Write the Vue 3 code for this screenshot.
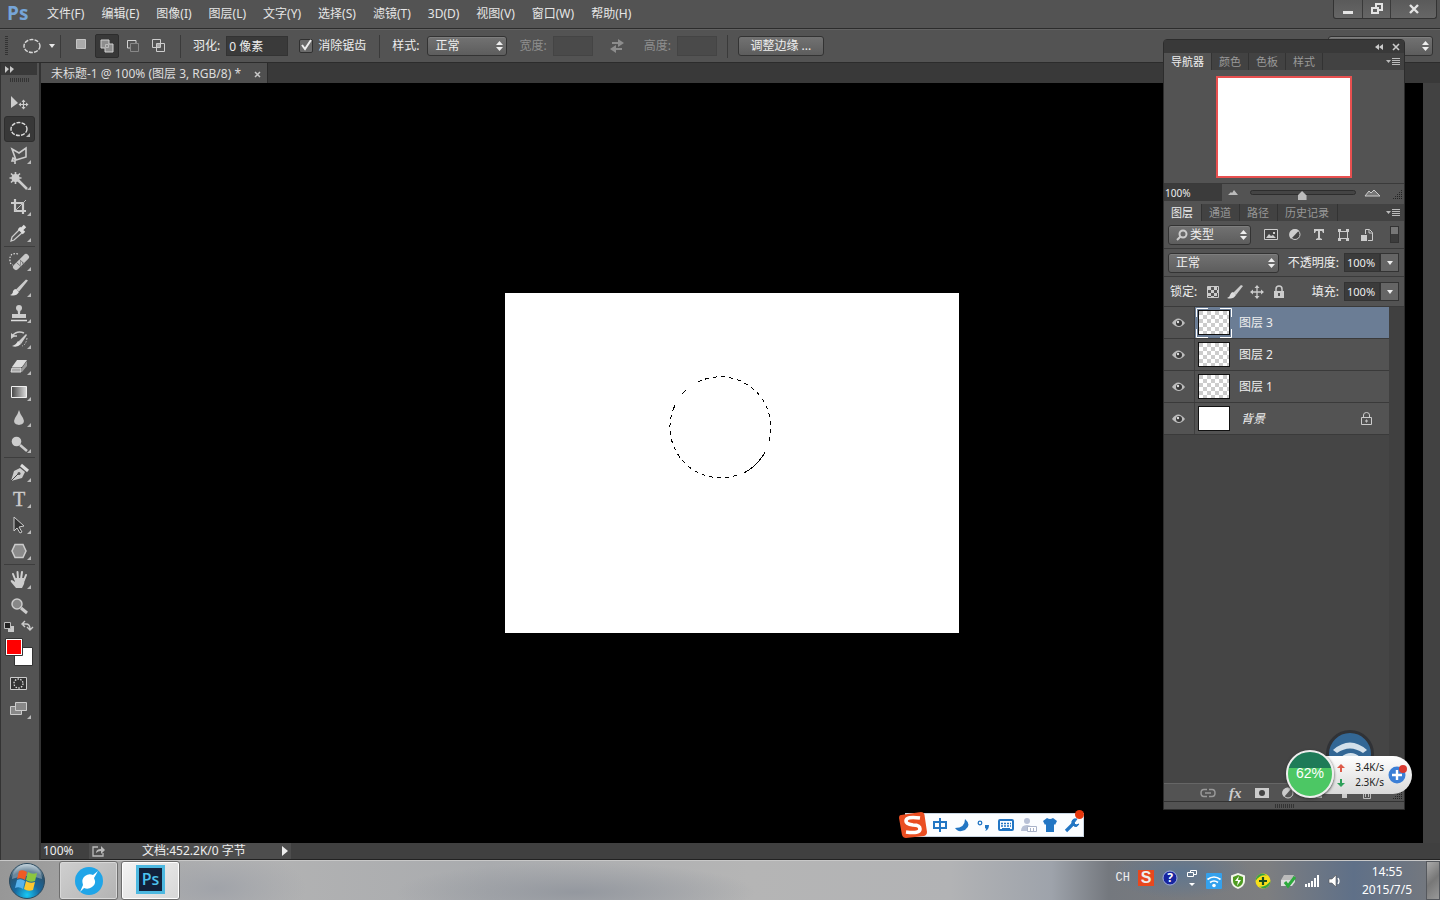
<template>
  <div class="desktop">
    <!-- Menu bar -->
    <header class="menu-bar">
      <span class="app-logo">Ps</span>
      <nav class="menus">
        <button v-for="item in menus" :key="item" type="button">{{ item }}</button>
      </nav>
      <div class="window-buttons">
        <button type="button" aria-label="minimize">
          <svg width="12" height="12"><path d="M1 8h10v3H1z" fill="#e4e4e4" /></svg>
        </button>
        <button type="button" aria-label="restore">
          <svg width="12" height="12" fill="none" stroke="#e4e4e4" stroke-width="2"><path d="M5 4V1h6v6H8M1 5h6v5H1z" /></svg>
        </button>
        <button type="button" class="close" aria-label="close">
          <svg width="12" height="12" stroke="#e4e4e4" stroke-width="2.4"><path d="M2 2l8 8M10 2l-8 8" /></svg>
        </button>
      </div>
    </header>

    <!-- Options bar -->
    <section class="options-bar">
      <i class="grip-vertical"></i>
      <button type="button" class="preset" aria-label="tool preset">
        <svg width="34" height="18">
          <ellipse cx="9" cy="9" rx="8" ry="6.5" fill="none" stroke="#d8d8d8" stroke-width="1.4" stroke-dasharray="4 1.2" />
          <path d="M26 7h6l-3 4z" fill="#e8e8e8" />
        </svg>
      </button>
      <i class="divider"></i>
      <div class="modes">
        <button v-for="mode in modes" :key="mode.name" type="button" :class="{ active: mode.active }" :aria-label="mode.name">
          <svg width="16" height="16" v-html="mode.icon"></svg>
        </button>
      </div>
      <i class="divider"></i>
      <label class="field">羽化: <input v-model="feather" class="feather" type="text" /></label>
      <label class="check">
        <input v-model="antiAlias" type="checkbox" />
        <svg v-if="antiAlias" width="15" height="15"><path d="M3 7l3 4 6-9" fill="none" stroke="#eee" stroke-width="2" /></svg>
        消除锯齿
      </label>
      <i class="divider"></i>
      <label class="field style-field">样式:
        <span class="select style-select">
          <select><option>正常</option></select>
          <svg width="7" height="12"><path d="M0 5l3.5-4L7 5zM0 7l3.5 4L7 7z" /></svg>
        </span>
      </label>
      <label class="field off">宽度: <input type="text" disabled /></label>
      <button type="button" class="swap" aria-label="swap" disabled>
        <svg width="16" height="14" fill="#8d8d8d"><path d="M3 3h6V0l6 4-6 4V5H3zM13 9v2H7v3l-6-4 6-4v3z" /></svg>
      </button>
      <label class="field off">高度: <input type="text" disabled /></label>
      <i class="divider"></i>
      <button type="button" class="refine">调整边缘 ...</button>
      <span class="select workspace">
        <select aria-label="workspace"><option></option></select>
        <svg width="7" height="12"><path d="M0 5l3.5-4L7 5zM0 7l3.5 4L7 7z" /></svg>
      </span>
    </section>

    <div class="work">
      <!-- Tool column -->
      <aside class="toolbox">
        <div class="toolbox-head"><svg width="9" height="7" fill="#c8c8c8"><path d="M0 0l4 3-4 4zM5 0l4 3-4 4z" /></svg></div>
        <i class="grip"></i>
        <div v-for="(group, g) in tools" :key="g" class="tool-group">
          <button v-for="tool in group" :key="tool.name" type="button" :class="{ active: tool.active, more: tool.more }" :aria-label="tool.name">
            <svg width="24" height="24" v-html="tool.icon"></svg>
          </button>
        </div>
        <button type="button" class="swatches" aria-label="colors">
          <svg width="36" height="48">
            <path d="M7 7h6v6H7z" fill="#c8c8c8" /><path d="M3.5 3.5h6v6h-6z" fill="#222" stroke="#bbb" />
            <path d="M22 5h3q4 0 4 5M24 2l-3 3 3 3M26 8l3 3 3-3" fill="none" stroke="#ccc" stroke-width="1.4" />
            <path d="M13.5 28.5h18v18h-18z" fill="#fff" stroke="#333" /><path d="M4.5 19.5h17v17h-17z" fill="#fff" stroke="#333" /><path d="M6 21h14v14H6z" fill="red" />
          </svg>
        </button>
        <div class="tool-group screen-tools">
          <button type="button" aria-label="quick mask">
            <svg width="24" height="24"><path d="M3.5 5.5h16v12h-16z" fill="#333" stroke="#ccc" /><circle cx="11.5" cy="11.5" r="4.5" fill="none" stroke="#ddd" stroke-width="1.3" stroke-dasharray="1.5 1.3" /></svg>
          </button>
          <button type="button" class="more" aria-label="screen mode">
            <svg width="24" height="24"><path d="M3.5 8.5h11v8h-11z" fill="#888" stroke="#ccc" /><path d="M8.5 4.5h11v8h-11z" fill="#888" stroke="#ccc" /></svg>
          </button>
        </div>
      </aside>

      <!-- Document -->
      <main class="document">
        <div class="tab-strip">
          <div class="doc-tab">未标题-1 @ 100% (图层 3, RGB/8) *
            <button type="button" aria-label="close tab"><svg width="7" height="7" stroke="#c8c8c8" stroke-width="1.5"><path d="M1 1l5 5M6 1L1 6" /></svg></button>
          </div>
        </div>
        <div class="view">
          <div class="stage">
            <svg class="artboard" width="454" height="340" fill="none" stroke="#000">
              <g shape-rendering="crispEdges">
                <path d="M193 89A50.5 50.5 0 0 1 263 151" stroke-dasharray="4 4" />
                <path d="M260 159A50.5 50.5 0 0 1 239 180" />
                <path d="M232 182A50.5 50.5 0 0 1 168 117" stroke-dasharray="4 4" />
                <path d="M168 117L170 112M177 101l4-4" />
              </g>
            </svg>
          </div>
          <div class="scroll-y"></div>
        </div>
        <footer class="status">
          <span class="zoom">100%</span>
          <span class="doc-info">
            <svg width="14" height="12" fill="none" stroke="#bbb" stroke-width="1.3"><path d="M6 2H1v9h10V8" /><path d="M4 8q0-4 5-4V1l4 4-4 4V6q-3 0-5 2z" fill="#bbb" stroke="none" /></svg>
            <span>文档:452.2K/0 字节</span>
            <svg width="6" height="10"><path d="M0 0l6 5-6 5z" fill="#eee" /></svg>
          </span>
        </footer>
      </main>
    </div>

    <!-- Taskbar -->
    <footer class="taskbar">
      <button type="button" class="start" aria-label="start">
        <svg width="38" height="38" viewBox="0 0 38 38">
          <defs>
            <radialGradient id="orb" cx=".5" cy=".9" r=".9"><stop offset="0" stop-color="#18c8f4" /><stop offset=".4" stop-color="#17689f" /><stop offset=".75" stop-color="#2b536f" /><stop offset="1" stop-color="#b5cad6" /></radialGradient>
          </defs>
          <circle cx="19" cy="19" r="17.5" fill="url(#orb)" stroke="#2c4a5e" />
          <path d="M4 17a15 15 0 0 1 30 0q-15-6-30 0z" fill="#fff" opacity=".3" />
          <path d="M11 9q4-2 8 1l-2 8q-4-3-8-1z" fill="#ee5a24" /><path d="M20 10q4 3 9 1l-2 8q-5 2-9-1z" fill="#8cc63f" />
          <path d="M9 18q4-2 8 1l-2 8q-4-3-8-1z" fill="#58b2ec" /><path d="M18 19q4 3 9 1l-2 8q-5 2-9-1z" fill="#fdc72f" />
        </svg>
      </button>
      <button type="button" class="task" aria-label="browser">
        <svg width="30" height="30"><circle cx="15" cy="15" r="14" fill="#20a5e8" /><path d="M24 5l-4 7q3 6-2 9-4 3-8 1l-4 4 3-7q-2-6 2-9 4-3 8-1z" fill="#fff" /></svg>
      </button>
      <button type="button" class="task current" aria-label="photoshop"><span class="ps-tile">Ps</span></button>
      <div class="tray">
        <span class="ime">CH</span>
        <span class="sogou-mini">S</span>
        <svg class="raised" width="16" height="16"><circle cx="8" cy="8" r="7" fill="#1725a0" stroke="#9faddd" /><text x="8" y="12" text-anchor="middle" fill="#fff" class="help-mark">?</text></svg>
        <svg class="raised" width="12" height="18" fill="none" stroke="#fff"><path d="M4.5 3V1.5h6v4H8M1.5 3.5h6v4h-6z" /><path d="M3 14h6l-3 3z" fill="#fff" stroke="none" /></svg>
        <svg width="16" height="16"><rect width="16" height="16" rx="1" fill="#34a1ed" /><path d="M1.5 6.5q6.5-5 13 0M4 9.5q4-3 8 0" fill="none" stroke="#fff" stroke-width="1.7" /><circle cx="8" cy="12.5" r="1.8" fill="#fff" /></svg>
        <svg width="16" height="16"><path d="M8 0l7 2.5V8q0 5-7 8-7-3-7-8V2.5z" fill="#f2f6ea" /><path d="M8 2l5 2v4q0 4-5 6-5-2-5-6V4z" fill="#4e9c21" /><path d="M9 3L5 8h3l-1 5 4-6H8z" fill="#fff" /></svg>
        <svg width="18" height="16"><circle cx="9" cy="8" r="7.5" fill="#f8df18" /><path d="M1.5 8A7.5 7.5 0 0 1 9 .5l4 2Q6 1 1.5 8zM16.5 8A7.5 7.5 0 0 1 9 15.5l-4-2q7 1 11.5-5.5z" fill="#35a344" /><path d="M9 4v8M5 8h8" stroke="#174d21" stroke-width="2.2" /></svg>
        <svg width="16" height="16"><path d="M4 2h10l-2 5H1z" fill="#bbb" /><path d="M1 7h11l3-4v6l-3 4H1z" fill="#dedede" /><path d="M5 9l3 4 7-9" fill="none" stroke="#2caa3c" stroke-width="3" /></svg>
        <svg width="16" height="14" fill="#fff"><path d="M1 10h2v3H1zM4 9h2v4H4zM7 7h2v6H7zM10 4h2v9h-2zM13 1h2v12h-2z" /></svg>
        <svg width="14" height="14"><path d="M1 5h3l4-4v12l-4-4H1z" fill="#fff" stroke="#555" stroke-width=".6" /><path d="M10 4q2 3 0 6" fill="none" stroke="#fff" stroke-width="1.3" /></svg>
      </div>
      <div class="clock"><time>14:55</time><time>2015/7/5</time></div>
      <button type="button" class="show-desktop" aria-label="show desktop"></button>
    </footer>

    <!-- Floating panel group -->
    <aside class="panels">
      <div class="panel-head">
        <svg width="25" height="8"><path d="M4 1v6L0 4zM8 1v6L4 4z" fill="#ccc" /><path d="M18 1l6 6M24 1l-6 6" stroke="#ccc" stroke-width="1.6" /></svg>
      </div>
      <div class="panel-tabs">
        <button v-for="(tab, i) in navTabs" :key="tab" type="button" :class="{ active: i === 0 }">{{ tab }}</button>
        <svg class="panel-menu" width="14" height="9"><path d="M0 2h5L2.5 5z" fill="#bbb" /><path d="M6 .5h8M6 2.5h8M6 4.5h8M6 6.5h8" stroke="#bbb" /></svg>
      </div>
      <div class="navigator"><div class="nav-thumb"></div></div>
      <div class="nav-zoom">
        <input v-model="zoom" type="text" aria-label="zoom" />
        <svg width="10" height="6"><path d="M0 5h10L6 0 4 3 3 2z" fill="#bbb" /></svg>
        <input type="range" value="49" aria-label="zoom slider" />
        <svg width="17" height="8" fill="#777" stroke="#ccc"><path d="M1 7l4-5 2 2 3-3 6 6z" /></svg>
        <i class="size-grip"></i>
      </div>
      <div class="panel-tabs layer-tabs">
        <button v-for="(tab, i) in layerTabs" :key="tab" type="button" :class="{ active: i === 0 }">{{ tab }}</button>
        <svg class="panel-menu" width="14" height="9"><path d="M0 2h5L2.5 5z" fill="#bbb" /><path d="M6 .5h8M6 2.5h8M6 4.5h8M6 6.5h8" stroke="#bbb" /></svg>
      </div>
      <div class="layer-row">
        <span class="select kind-select">
          <svg class="lens" width="12" height="12" fill="none" stroke="#ccc" stroke-width="2"><circle cx="7" cy="5" r="3.5" /><path d="M4.5 7.5L1 11" /></svg>
          <select aria-label="filter"><option>类型</option></select>
          <svg width="7" height="12"><path d="M0 5l3.5-4L7 5zM0 7l3.5 4L7 7z" /></svg>
        </span>
        <div class="filters">
          <button v-for="filter in filters" :key="filter.name" type="button" :aria-label="filter.name">
            <svg width="14" height="14" v-html="filter.icon"></svg>
          </button>
        </div>
        <i class="toggle"></i>
      </div>
      <div class="layer-row">
        <span class="select blend-select">
          <select aria-label="blend mode"><option>正常</option></select>
          <svg width="7" height="12"><path d="M0 5l3.5-4L7 5zM0 7l3.5 4L7 7z" /></svg>
        </span>
        <label class="percent">不透明度: <input v-model="opacity" type="text" /></label>
        <button type="button" class="drop" aria-label="opacity"><svg width="6" height="4"><path d="M0 0h6L3 4z" fill="#eee" /></svg></button>
      </div>
      <div class="layer-row lock-row">
        <span class="lock-label">锁定:</span>
        <button v-for="lock in locks" :key="lock.name" type="button" class="lock" :aria-label="lock.name">
          <svg width="16" height="16" v-html="lock.icon"></svg>
        </button>
        <label class="percent">填充: <input v-model="fill" type="text" /></label>
        <button type="button" class="drop" aria-label="fill"><svg width="6" height="4"><path d="M0 0h6L3 4z" fill="#eee" /></svg></button>
      </div>
      <div class="layers">
        <ul>
          <li v-for="layer in layers" :key="layer.name" :class="{ active: layer.active }">
            <button type="button" class="eye" aria-label="visibility">
              <svg width="14" height="10"><path d="M0 5q6-9 13 0-6 8-13 0z" fill="#bdbdbd" /><circle cx="7" cy="5" r="3" fill="#383838" /><circle cx="6" cy="4" r="1.2" fill="#ddd" /></svg>
            </button>
            <div class="thumb-cell">
              <i class="thumb" :class="{ solid: layer.background }"></i>
              <svg v-if="layer.active" class="corners" width="36" height="30" fill="none" stroke="#fff"><path d="M.5 9V.5H12M24 .5h11.5V9M35.5 21v8.5H24M12 29.5H.5V21" /></svg>
            </div>
            <span class="layer-name" :class="{ italic: layer.background }">{{ layer.name }}</span>
            <svg v-if="layer.background" class="layer-lock" width="11" height="13" fill="none" stroke="#ccc"><path d="M.5 5.5h10v7H.5zM2.5 5V3q0-2.500 3-2.500t3 2.500v2" /><path d="M5 8h1v2H5z" /></svg>
          </li>
        </ul>
        <div class="layers-scroll"></div>
      </div>
      <div class="panel-tools">
        <svg width="16" height="12" fill="none" stroke="#999" stroke-width="1.5"><path d="M7 2.5H4q-3 0-3 3.5t3 3.5h3M9 2.5h3q3 0 3 3.5t-3 3.5H9M5 6h6" /></svg>
        <span class="fx">fx</span>
        <svg width="14" height="12"><path d="M0 1h14v10H0z" fill="#ccc" /><circle cx="7" cy="6" r="3" fill="#444" /></svg>
        <svg width="14" height="12"><circle cx="6" cy="6" r="5" fill="#555" stroke="#ccc" /><path d="M2 10A5 5 0 0 1 9 2z" fill="#ccc" /></svg>
        <svg width="14" height="12"><path d="M0 2h5l1 2h7v7H0z" fill="#bbb" /></svg>
        <svg width="12" height="12"><path d="M1 2h10v9H6V7H1z" fill="#ccc" /></svg>
        <svg width="12" height="12" fill="none" stroke="#bbb"><path d="M1 2.5h10M2.5 3v8.5h7V3M4.5 4v6M7.5 4v6" /></svg>
        <i class="size-grip"></i>
      </div>
      <div class="panel-foot"><i class="grip"></i></div>
    </aside>

    <!-- Network monitor -->
    <div class="wifi-badge">
      <svg width="48" height="48"><circle cx="24" cy="24" r="22.5" fill="#336795" stroke="#303236" stroke-width="3" /><path d="M7 20q17-15 34 0l-4 3q-13-9-26 0zM15 27q10-8 19 0l-4 3q-5-4-11 0z" fill="#d3e0ea" /></svg>
    </div>
    <div class="net-monitor">
      <div class="usage">62%</div>
      <div class="rates">
        <div><svg width="8" height="8"><path d="M4 0l4 4H5v4H3V4H0z" fill="#dd5b49" /></svg><span>3.4K/s</span></div>
        <div><svg width="8" height="8"><path d="M4 8L0 4h3V0h2v4h3z" fill="#2ea05a" /></svg><span>2.3K/s</span></div>
      </div>
      <button type="button" class="boost" aria-label="boost">
        <svg width="19" height="22"><circle cx="9" cy="12" r="8.5" fill="#3b7fd6" /><path d="M9 7v10M4 12h10" stroke="#fff" stroke-width="2.4" /><circle cx="15" cy="6" r="4" fill="#d93a32" /></svg>
      </button>
    </div>

    <!-- Input method bar -->
    <div class="ime-bar">
      <svg class="sogou-logo" width="30" height="30"><path d="M3 5L23 2q3 0 3.5 3L29 22q0 3-3 4L8 28q-3 0-4-3L1 8q0-3 2-3z" fill="#ea4e22" /><path d="M22 8Q8 6 8 11q0 3 7 4 7 0 7 4 0 5-14 3" fill="none" stroke="#fff" stroke-width="3.6" /></svg>
      <button v-for="item in imeItems" :key="item.name" type="button" :aria-label="item.name">
        <svg width="18" height="16" v-html="item.icon"></svg>
      </button>
      <i class="ime-dot"></i>
    </div>
  </div>
</template>

<script setup>
import { ref } from 'vue';

const feather = ref('0 像素');
const antiAlias = ref(true);
const zoom = ref('100%');
const opacity = ref('100%');
const fill = ref('100%');

const menus = ['文件(F)', '编辑(E)', '图像(I)', '图层(L)', '文字(Y)', '选择(S)', '滤镜(T)', '3D(D)', '视图(V)', '窗口(W)', '帮助(H)'];
const navTabs = ['导航器', '颜色', '色板', '样式'];
const layerTabs = ['图层', '通道', '路径', '历史记录'];

const layers = [
  { name: '图层 3', active: true },
  { name: '图层 2' },
  { name: '图层 1' },
  { name: '背景', background: true },
];

const modes = [
  { name: 'new', icon: '<path d="M3.5 1.5h9v9h-9z" fill="#aaa" stroke="#c4c4c4"/>' },
  { name: 'add', active: true, icon: '<path d="M2 2h8v4h4v8H6v-4H2z" fill="#8d8d8d" stroke="#d2d2d2"/><path d="M6.5 9.5v-3h3v3z" stroke="#bbb" fill="none"/>' },
  { name: 'subtract', icon: '<path d="M5.5 5.5h8v8h-8z" fill="none" stroke="#888"/><path d="M5 10H2.5V2.5H11V5" fill="none" stroke="#d2d2d2"/>' },
  { name: 'intersect', icon: '<path d="M1.5 1.5h8v8h-8zM5.5 5.5h8v8h-8z" fill="none" stroke="#ccc"/><path d="M6 6h3v3H6z" fill="#aaa"/>' },
];

const tools = [
  [
    { name: 'move', icon: '<path d="M4 5v12l7-5z" fill="#ccc"/><path d="M16.5 9v9M12 13.5h9" stroke="#ccc" stroke-width="1.2"/><path d="M14.5 11l2-2.5 2 2.5zM14.5 16l2 2.5 2-2.5zM14 11.5l-2.5 2 2.5 2zM19 11.5l2.5 2-2.5 2z" fill="#ccc"/>' },
    { name: 'marquee', active: true, more: true, icon: '<ellipse cx="12" cy="12" rx="8" ry="6.5" fill="none" stroke="#ddd" stroke-width="1.4" stroke-dasharray="4 1.2"/>' },
    { name: 'lasso', more: true, icon: '<path d="M5 6l7 4 7-5v9l-10 3zM9 17l-3-2-1 3h3v3" fill="none" stroke="#ccc" stroke-width="1.6"/>' },
    { name: 'wand', more: true, icon: '<path d="M8.5 3v12M2.5 9h12M4 4.5l9 9M13 4.5l-9 9" stroke="#ccc" stroke-width="1.6"/><circle cx="8.5" cy="9" r="4" fill="#ccc"/><path d="M11 11l9 9" stroke="#ccc" stroke-width="2.5"/>' },
    { name: 'crop', more: true, icon: '<path d="M8 4v12h11M4 8h12v11" fill="none" stroke="#ccc" stroke-width="2.2"/><path d="M8 16L19 5" stroke="#bbb"/>' },
    { name: 'eyedropper', more: true, icon: '<path d="M13 8l-8 8-1 4 3-1 9-8z" fill="#555" stroke="#ccc" stroke-width="1.3"/><path d="M12 7l5 5M14 9l4-4" stroke="#ddd" stroke-width="3.4"/>' },
  ],
  [
    { name: 'healing', more: true, icon: '<path d="M11 4q-9-2-8 7 0 3 3 4" fill="none" stroke="#ddd" stroke-width="1.2" stroke-dasharray="1.5 1.5"/><path d="M9 17l10-10" stroke="#c8c8c8" stroke-width="6" stroke-linecap="round"/><path d="M9.5 12.5l5 4.5M12.5 9.5l5 4.5" stroke="#777"/><path d="M13 12h1M15 13h1M13 14h1" stroke="#555"/>' },
    { name: 'brush', more: true, icon: '<path d="M19 3.5l2 1-9 11-3-2z" fill="#ccc"/><path d="M9 13l3 3q-3 5-9 3 3-1 3-4 1-2 3-2z" fill="#ddd"/>' },
    { name: 'stamp', more: true, icon: '<circle cx="12" cy="6" r="3" fill="#ccc"/><path d="M10.5 7h3l-.5 5h6v4H5v-4h6z" fill="#ccc"/><path d="M4 18.5h16" stroke="#ddd" stroke-width="1.5"/>' },
    { name: 'history', more: true, icon: '<path d="M19 6l1 1-6 9-3-2z" fill="#ccc"/><path d="M11 13l3 3q-4 4-9 2 4-1 6-5z" fill="#ddd"/><path d="M4 8h6M5 8q5-6 12-3" fill="none" stroke="#ccc" stroke-width="1.5"/><path d="M4 5v6l4-3z" fill="#ccc"/><path d="M20 10q-1 7-5 8" fill="none" stroke="#ccc" stroke-dasharray="1.5 1.5"/>' },
    { name: 'eraser', more: true, icon: '<path d="M10 6h10l-5 7H5z" fill="#ddd"/><path d="M5 14h9v4H4z" fill="#aaa" stroke="#ddd"/><path d="M15 14l5-7v5l-5 6z" fill="#999"/>' },
    { name: 'gradient', more: true, icon: '<defs><linearGradient id="gr"><stop stop-color="#444"/><stop offset="1" stop-color="#ddd"/></linearGradient></defs><path d="M4.5 6.5h15v11h-15z" fill="url(#gr)" stroke="#eee"/>' },
    { name: 'blur', more: true, icon: '<path d="M12 4q1 4 4 8 3 6-4 7-7-1-4-7 3-4 4-8z" fill="#c8c8c8"/>' },
    { name: 'dodge', more: true, icon: '<circle cx="9.5" cy="9.5" r="4.8" fill="#ccc"/><path d="M13 13l7 6" stroke="#ccc" stroke-width="2.5"/>' },
  ],
  [
    { name: 'pen', more: true, icon: '<path d="M4 20l3-10 6-3 5 4-3 6z" fill="#ccc"/><path d="M14 4l7 6" stroke="#ddd" stroke-width="3"/><path d="M4 20l7-7" stroke="#444"/><circle cx="12" cy="12.5" r="1.5" fill="#555"/>' },
    { name: 'type', more: true, icon: '<text x="12" y="19" text-anchor="middle" font-family="Liberation Serif, serif" font-size="20" fill="#ccc" stroke="#ccc" stroke-width=".4">T</text>' },
    { name: 'select path', more: true, icon: '<path d="M7 4v14l3-3 3 5 2-1-3-5 5-1z" fill="#333" stroke="#ccc"/>' },
    { name: 'shape', more: true, icon: '<path d="M8 5.5h8l3 6.5-3 6.5H8L5 12z" fill="#8b8b8b" stroke="#ccc" stroke-width="1.5"/>' },
  ],
  [
    { name: 'hand', more: true, icon: '<path d="M8 11L6 6M11 11l-.5-7M14 11l1-7M17 12l2-5" stroke="#d0d0d0" stroke-width="2" stroke-linecap="round"/><path d="M7 10h11l-1 6-2 4H9l-5-6q-1-2 1-2l3 2z" fill="#ccc"/>' },
    { name: 'zoom', icon: '<circle cx="10" cy="10" r="5" fill="#888" stroke="#ccc" stroke-width="1.5"/><path d="M14 14l6 5" stroke="#ccc" stroke-width="3"/>' },
  ],
];

const filters = [
  { name: 'pixel', icon: '<path d="M.5 1.5h13v10H.5z" fill="#444" stroke="#ccc"/><path d="M2 10l3-4 2 2 2-1 3 3z" fill="#ccc"/><path d="M9 4h2v2H9z" fill="#ccc"/>' },
  { name: 'adjustment', icon: '<circle cx="7" cy="6.5" r="5" fill="#444" stroke="#ccc"/><path d="M3 11A5.5 5.5 0 0 1 11 2.5z" fill="#ccc"/>' },
  { name: 'type', icon: '<path d="M2 1h10v4h-1l-1-2H8v7l2 1v1H4v-1l2-1V3H4L3 5H2z" fill="#ccc"/>' },
  { name: 'shape', icon: '<path d="M3.5 3.5h8v7h-8z" fill="none" stroke="#ccc"/><path d="M2 1h3v3H2zM10 1h3v3h-3zM2 10h3v3H2zM10 10h3v3h-3z" fill="#ccc"/>' },
  { name: 'smart', icon: '<path d="M5.5 6V1.5h4l3 3v8H8M9 2v3h3" fill="none" stroke="#ccc"/><path d="M1 7h6v6H1z" fill="#ccc"/>' },
];

const locks = [
  { name: 'pixels', icon: '<path d="M2.5 2.5h11v11h-11z" fill="#555" stroke="#ccc"/><path d="M3 3h3v3H3zM9 3h3v3H9zM6 6h3v3H6zM3 9h3v3H3zM9 9h3v3H9zM12 6h1v3h-1zM6 12h3v1H6z" fill="#ccc"/>' },
  { name: 'paint', icon: '<path d="M14 1l2 1-7 9-3-2z" fill="#ccc"/><path d="M6 8l3 3q-3 5-9 3 3-1 3-3 1-3 3-3z" fill="#ddd"/>' },
  { name: 'position', icon: '<path d="M8 2v12M2 8h12" stroke="#ccc" stroke-width="1.3"/><path d="M5.5 4L8 1l2.5 3zM5.5 12L8 15l2.5-3zM4 5.5L1 8l3 2.5zM12 5.5L15 8l-3 2.5z" fill="#ccc"/>' },
  { name: 'all', icon: '<path d="M5 8V5q0-3 3-3t3 3v3" fill="none" stroke="#ccc" stroke-width="1.5"/><path d="M3 7h10v7H3z" fill="#ccc"/><path d="M7 9h2v3H7z" fill="#555"/>' },
];

const imeItems = [
  { name: 'chinese', icon: '<path d="M3 5h12v6H3zM9 1v14" fill="none" stroke="#2276c4" stroke-width="2"/>' },
  { name: 'moon', icon: '<path d="M12 2q7 6 0 11-7 3-10-2 10 0 10-9z" fill="#2276c4"/>' },
  { name: 'punctuation', icon: '<circle cx="5" cy="6" r="1.8" fill="none" stroke="#2276c4" stroke-width="1.3"/><path d="M10 8h4q0 5-4 6 2-2 0-3z" fill="#2276c4"/>' },
  { name: 'keyboard', icon: '<rect x="2" y="3" width="14" height="10" rx="1" fill="none" stroke="#2276c4" stroke-width="2"/><path d="M4 6.5h10M4 9h10" stroke="#2276c4" stroke-width="1.3" stroke-dasharray="2 1"/><path d="M5 11.5h8" stroke="#2276c4"/>' },
  { name: 'account', icon: '<circle cx="8" cy="4" r="3" fill="#b8c1d6"/><path d="M2 14q0-6 6-6t6 6z" fill="#b8c1d6"/><path d="M8.5 9.5h9v5h-9z" fill="#fff" stroke="#a9b3c9"/><path d="M11.5 11v3M14.5 11v3" stroke="#a9b3c9"/>' },
  { name: 'skin', icon: '<path d="M6 1q3 2 6 0l4 3-2 4-1-1v8H5V7L4 8 2 4z" fill="#2276c4"/>' },
  { name: 'settings', icon: '<path d="M3 14l7-7" stroke="#2276c4" stroke-width="3.2"/><path d="M14 2q-4-1-5 2t2 5 5-2l-3 1-2-2z" fill="#2276c4" stroke="#2276c4"/>' },
];
</script>

<style>
body {
  margin: 0;
  overflow: hidden;
}
</style>

<style scoped>
.desktop {
  position: relative;
  display: flex;
  flex-direction: column;
  height: 100vh;
  overflow: hidden;
  background: #535353;
  color: #eee;
  font-family: "Noto Sans", "Noto Sans CJK SC", sans-serif;
  font-size: 12px;
  line-height: 16px;
}

.desktop * {
  box-sizing: border-box;
}

button,
input,
select {
  font: inherit;
  color: inherit;
  margin: 0;
  padding: 0;
  border: 0;
  background: none;
  border-radius: 0;
}

svg {
  display: block;
  flex-shrink: 0;
}

/* menu bar */
.menu-bar {
  display: flex;
  height: 29px;
  flex-shrink: 0;
  border-bottom: 1px solid #2c2c2c;
  padding-right: 3px;
}

.app-logo {
  width: 39px;
  padding-left: 7px;
  color: #76a5d8;
  font-family: "Open Sans", sans-serif;
  font-size: 19px;
  font-weight: 700;
  line-height: 26px;
}

.menus {
  display: flex;
  flex: 1;
  gap: 17px;
  padding-left: 8px;
}

.menus button {
  height: 28px;
  color: #e6e6e6;
}

.window-buttons {
  display: flex;
  height: 19px;
  border: 1px solid #333;
  border-top: 0;
  border-radius: 0 0 3px 3px;
  background: linear-gradient(#5a5a5a, #666);
}

.window-buttons button {
  display: grid;
  place-items: center;
  width: 28px;
}

.window-buttons button + button {
  border-left: 1px solid #3a3a3a;
}

.window-buttons .close {
  width: 46px;
}

/* options bar */
.options-bar {
  display: flex;
  align-items: center;
  height: 34px;
  flex-shrink: 0;
  padding: 0 7px 0 5px;
  border-top: 1px solid #626262;
  border-bottom: 1px solid #2c2c2c;
}

.grip-vertical {
  width: 3px;
  height: 20px;
  margin-right: 15px;
  background: repeating-linear-gradient(#333 0 1px, #535353 1px 2px);
}

.divider {
  width: 1px;
  height: 23px;
  background: #3a3a3a;
}

.preset {
  margin-right: 3px;
}

.modes {
  display: flex;
  gap: 2px;
  margin: 0 9px 0 8px;
}

.modes button {
  display: grid;
  place-items: center;
  width: 24px;
  height: 24px;
  border-radius: 2px;
}

.modes .active {
  background: #383838;
  border: 1px solid #2d2d2d;
}

.field {
  display: flex;
  align-items: center;
  gap: 6px;
  margin-left: 12px;
}

.field input {
  width: 40px;
  height: 20px;
  padding-left: 2px;
  background: #3a3a3a;
  border: 1px solid #333;
}

.field .feather {
  width: 62px;
}

.off {
  color: #8f8f8f;
}

.off input {
  background: #4a4a4a;
  border-color: #444;
}

.check {
  display: flex;
  align-items: center;
  gap: 5px;
  position: relative;
  margin: 0 13px 0 11px;
}

.check input {
  appearance: none;
  width: 14px;
  height: 14px;
  border: 1px solid #303030;
  border-radius: 2px;
  background: #6a6a6a;
}

.check svg {
  position: absolute;
  left: 0;
  top: 0;
}

.style-field {
  gap: 8px;
}

.select {
  position: relative;
  display: flex;
  height: 20px;
  border: 1px solid #333;
  border-radius: 3px;
  background: linear-gradient(#727272, #5d5d5d);
  box-shadow: inset 0 1px #7e7e7e;
}

.select select {
  appearance: none;
  width: 100%;
  padding-left: 7px;
  outline: 0;
}

.select svg {
  position: absolute;
  right: 3px;
  top: 3px;
  fill: #eee;
  pointer-events: none;
}

.style-select {
  width: 80px;
}

.swap {
  margin: 0 7px 0 16px;
}

.swap + .field {
  margin-right: 10px;
}

.refine {
  height: 20px;
  width: 86px;
  margin-left: 10px;
  border: 1px solid #333;
  border-radius: 3px;
  background: linear-gradient(#727272, #5d5d5d);
}

.workspace {
  width: 105px;
  margin-left: auto;
}

/* tool column */
.work {
  display: flex;
  flex: 1;
  min-height: 0;
}

.toolbox {
  display: flex;
  flex-direction: column;
  align-items: center;
  width: 41px;
  padding-right: 2px;
  border-left: 1px solid #333;
  border-right: 2px solid #333;
  background: #535353;
}

.toolbox-head {
  align-self: stretch;
  height: 12px;
  padding: 3px 4px;
  background: #393939;
}

.grip {
  width: 19px;
  height: 4px;
  background: repeating-linear-gradient(90deg, #333 0 1px, #535353 1px 2px);
}

.toolbox .grip {
  margin: 3px 0 8px;
}

.tool-group {
  display: flex;
  flex-direction: column;
}

.tool-group + .tool-group {
  padding-top: 2px;
  border-top: 1px solid #3d3d3d;
}

.tool-group button {
  position: relative;
  display: grid;
  place-items: center;
  width: 31px;
  height: 26px;
}

.tool-group .active {
  border: 1px solid #2e2e2e;
  border-radius: 3px;
  background: #383838;
}

.tool-group .more::after {
  content: "";
  position: absolute;
  right: 4px;
  bottom: 4px;
  border: 2px solid transparent;
  border-right-color: #bbb;
  border-bottom-color: #bbb;
}

.swatches {
  align-self: flex-start;
}

.screen-tools {
  margin-top: 4px;
}

/* document */
.document {
  display: flex;
  flex: 1;
  flex-direction: column;
  min-width: 0;
}

.tab-strip {
  display: flex;
  height: 20px;
  flex-shrink: 0;
  background: #393939;
}

.doc-tab {
  display: flex;
  align-items: center;
  gap: 13px;
  padding: 2px 6px 0 10px;
  border-right: 1px solid #2b2b2b;
  background: #4f4f4f;
  color: #ddd;
  white-space: nowrap;
}

.view {
  display: flex;
  flex: 1;
  min-height: 0;
}

.stage {
  display: grid;
  place-items: center;
  flex: 1;
  background: #000;
}

.artboard {
  background: #fff;
}

.scroll-y {
  width: 17px;
  background: #424242;
}

.status {
  display: flex;
  height: 17px;
  flex-shrink: 0;
  background: #404040;
  border-bottom: 1px solid #222;
}

.zoom {
  width: 48px;
  padding-left: 2px;
}

.doc-info {
  display: flex;
  align-items: center;
  gap: 36px;
  width: 202px;
  padding-left: 3px;
  background: #4d4d4d;
}

/* taskbar */
.taskbar {
  display: flex;
  align-items: center;
  height: 40px;
  flex-shrink: 0;
  padding-left: 8px;
  border-top: 1px solid #c8c8c8;
  background:
    radial-gradient(ellipse 70px 26px at 82% 30%, #5f7690 0, transparent 100%),
    radial-gradient(ellipse 90px 40px at 15% 70%, #a0a3a9 0, transparent 100%),
    radial-gradient(ellipse 180px 30px at 40% 80%, #94989f 0, transparent 100%),
    linear-gradient(90deg, #979797 0, #b4b4b4 15%, #a9abae 34%, #b5b5b5 52%, #b2b3b5 66%, #9ea3ab 73%, #74787e 77%, #7d7e80 88%, #5f7088 94%, #77797d 100%);
}

.start {
  margin-right: 13px;
}

.task {
  display: grid;
  place-items: center;
  width: 59px;
  height: 39px;
  margin-right: 3px;
  border: 1px solid #6e6e6e;
  border-radius: 3px;
  background: linear-gradient(135deg, #cfcfcf, #b3b3b3);
  box-shadow: inset 0 0 0 1px #d8d8d8;
}

.current {
  background: linear-gradient(135deg, #f4f4f4, #d6d6d6);
  box-shadow: inset 0 0 0 1px #fff;
}

.ps-tile {
  width: 29px;
  height: 29px;
  margin-bottom: 2px;
  border: 3px solid #4db8e0;
  background: #12203a;
  color: #4dc2ee;
  font-family: "Open Sans", sans-serif;
  font-size: 16px;
  font-weight: 600;
  line-height: 22px;
}

.tray {
  display: flex;
  align-items: center;
  gap: 8px;
  margin-left: auto;
}

.ime {
  margin-bottom: 5px;
  font-family: "Liberation Mono", monospace;
}

.sogou-mini {
  width: 16px;
  height: 16px;
  margin-bottom: 5px;
  background: #e8481e;
  font-family: "Liberation Sans", sans-serif;
  font-size: 16px;
  font-weight: 700;
  text-align: center;
}

.raised {
  margin-bottom: 5px;
}

.help-mark {
  font-size: 12px;
  font-weight: 700;
}

.clock {
  display: flex;
  flex-direction: column;
  align-items: center;
  width: 84px;
  padding-left: 6px;
  line-height: 18px;
  color: #fff;
}

.show-desktop {
  width: 14px;
  height: 100%;
  border: 1px solid #55585d;
  background: linear-gradient(135deg, #aaa, #777 50%, #999);
}

/* floating panels */
.panels {
  position: absolute;
  top: 39px;
  right: 35px;
  bottom: 90px;
  display: flex;
  flex-direction: column;
  width: 242px;
  border: 1px solid #2c2c2c;
  border-radius: 4px 4px 0 0;
  background: #535353;
}

.panel-head {
  display: flex;
  align-items: center;
  justify-content: flex-end;
  height: 13px;
  padding-right: 4px;
  background: #393939;
}

.panel-tabs {
  display: flex;
  align-items: stretch;
  height: 17px;
  flex-shrink: 0;
  background: #424242;
}

.panel-tabs button {
  padding: 0 7px;
  border-right: 1px solid #333;
  color: #999;
  font-size: 11px;
  line-height: 17px;
}

.panel-tabs .active {
  background: #535353;
  color: #eee;
}

.panel-menu {
  margin: 5px 4px 0 auto;
}

.navigator {
  display: grid;
  place-items: center;
  height: 113px;
}

.nav-thumb {
  width: 136px;
  height: 102px;
  border: 2px solid #e85050;
  background: #fff;
}

.nav-zoom {
  display: flex;
  align-items: center;
  height: 18px;
  flex-shrink: 0;
  border-top: 1px solid #3a3a3a;
}

.nav-zoom input[type="text"] {
  width: 58px;
  height: 17px;
  margin-right: 6px;
  padding-left: 1px;
  background: #3b3b3b;
  font-size: 10px;
}

.nav-zoom input[type="range"] {
  appearance: none;
  width: 106px;
  height: 14px;
  margin: 0 8px 0 12px;
}

.nav-zoom input::-webkit-slider-runnable-track {
  height: 5px;
  border: 1px solid #2d2d2d;
  border-radius: 3px;
  background: #444;
}

.nav-zoom input::-webkit-slider-thumb {
  appearance: none;
  width: 9px;
  height: 9px;
  background: #bbb;
  clip-path: polygon(50% 0, 100% 50%, 100% 100%, 0 100%, 0 50%);
}

.size-grip {
  width: 10px;
  height: 10px;
  margin: 4px 2px 0 auto;
  background: conic-gradient(#222 25%, transparent 0) 0 0 / 2px 2px;
  clip-path: polygon(100% 0, 100% 100%, 0 100%);
}

.layer-tabs {
  margin-top: 3px;
}

.layer-tabs button {
  padding-right: 8px;
}

.layer-row {
  display: flex;
  align-items: center;
  height: 28px;
  flex-shrink: 0;
  padding: 0 5px 0 4px;
  border-bottom: 1px solid #3a3a3a;
}

.kind-select {
  width: 83px;
}

.kind-select select {
  padding-left: 21px;
}

.select .lens {
  left: 7px;
  right: auto;
  fill: none;
}

.filters {
  display: flex;
  gap: 10px;
  margin-left: 13px;
}

.toggle {
  width: 9px;
  height: 17px;
  margin-left: auto;
  border: 1px solid #333;
  background: linear-gradient(#777 50%, #3c3c3c 50%);
}

.blend-select {
  width: 111px;
}

.percent {
  display: flex;
  align-items: center;
  gap: 5px;
  margin-left: auto;
}

.percent input {
  width: 36px;
  height: 19px;
  padding-left: 2px;
  border: 1px solid #333;
  background: #3b3b3b;
  font-size: 11px;
}

.drop {
  display: grid;
  place-items: center;
  width: 19px;
  height: 19px;
  border: 1px solid #333;
  background: #656565;
}

.lock-row {
  height: 30px;
}

.lock-label {
  width: 37px;
  padding-left: 2px;
  white-space: nowrap;
}

.lock {
  width: 16px;
  margin-right: 6px;
}

.layers {
  display: flex;
  flex: 1;
  min-height: 0;
  background: #454545;
}

.layers ul {
  flex: 1;
  margin: 0;
  padding: 0;
  list-style: none;
}

.layers li {
  display: flex;
  align-items: center;
  height: 32px;
  border-bottom: 1px solid #3a3a3a;
  background: #535353;
}

.layers .active {
  background: #6b7d95;
}

.eye {
  display: grid;
  place-items: center;
  width: 31px;
  height: 31px;
  border-right: 1px solid #3f3f3f;
  background: #535353;
}

.thumb-cell {
  position: relative;
  padding-left: 3px;
}

.thumb {
  display: block;
  width: 32px;
  height: 25px;
  border: 1px solid #111;
  background: repeating-conic-gradient(#fff 0 25%, #ccc 0 50%) 0 0 / 8px 8px;
}

.solid {
  background: #fff;
}

.corners {
  position: absolute;
  left: 1px;
  top: -2px;
}

.layer-name {
  margin-left: 9px;
}

.italic {
  padding-left: 2px;
  font-style: italic;
}

.layer-lock {
  margin: 0 17px 0 auto;
}

.layers-scroll {
  width: 15px;
  background: #404040;
}

.panel-tools {
  display: flex;
  align-items: center;
  gap: 13px;
  height: 19px;
  padding-left: 36px;
  border-top: 1px solid #666;
  border-bottom: 1px solid #333;
}

.fx {
  font-family: "Liberation Serif", serif;
  font-size: 15px;
  font-style: italic;
  font-weight: 700;
  color: #ccc;
}

.panel-foot {
  display: grid;
  place-items: center;
  height: 7px;
}

/* network monitor */
.wifi-badge {
  position: absolute;
  right: 66px;
  bottom: 122px;
}

.net-monitor {
  position: absolute;
  right: 28px;
  bottom: 106px;
  display: flex;
  align-items: center;
  width: 104px;
  height: 38px;
  border-radius: 19px;
  background: linear-gradient(#fff, #d9d9d9);
  color: #222;
}

.usage {
  flex-shrink: 0;
  width: 48px;
  height: 48px;
  margin: 0 0 2px -22px;
  border: 2px solid #eee;
  border-radius: 50%;
  background: linear-gradient(#1e7b58 36%, #4cc764 36%);
  color: #fff;
  font-family: "Liberation Sans", sans-serif;
  font-size: 14px;
  line-height: 43px;
  text-align: center;
  box-shadow: 0 1px 3px #333;
}

.rates {
  display: flex;
  flex: 1;
  flex-direction: column;
  padding-left: 3px;
  font-size: 10px;
  line-height: 15px;
}

.rates div {
  display: flex;
  align-items: center;
  justify-content: space-between;
}

.boost {
  margin: 0 5px 2px 4px;
}

/* input method bar */
.ime-bar {
  position: absolute;
  left: 905px;
  bottom: 63px;
  display: flex;
  align-items: center;
  gap: 4px;
  height: 24px;
  padding-right: 2px;
  border: 1px solid #c9d6e2;
  background: #fbfdff;
}

.sogou-logo {
  margin: 0 -1px 0 -8px;
}

.ime-dot {
  position: absolute;
  top: -4px;
  right: -1px;
  width: 9px;
  height: 9px;
  border-radius: 50%;
  background: #e8380d;
}
</style>
